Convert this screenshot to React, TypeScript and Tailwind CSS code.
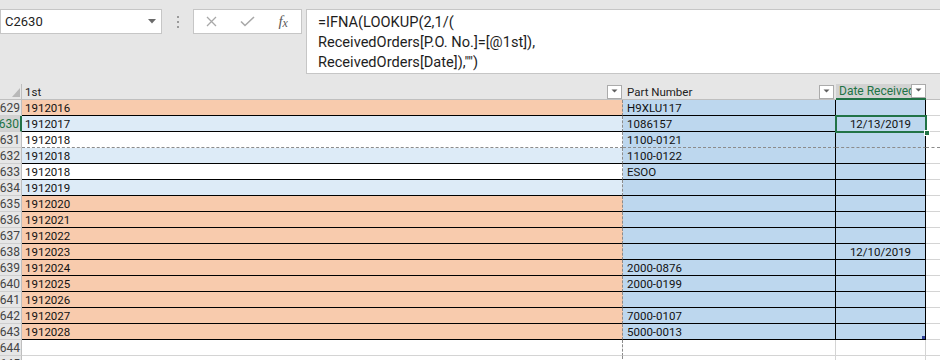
type Fill = 'o' | 'l' | 'w';

type Row = {
  n: number;
  a: string;
  b: string;
  c?: string;
  fill: Fill;
  sel?: boolean;
  dash?: boolean;
};

const rows: Row[] = [
  { n: 2629, a: '1912016', b: 'H9XLU117', fill: 'o' },
  { n: 2630, a: '1912017', b: '1086157', c: '12/13/2019', fill: 'l', sel: true },
  { n: 2631, a: '1912018', b: '1100-0121', fill: 'w', dash: true },
  { n: 2632, a: '1912018', b: '1100-0122', fill: 'l' },
  { n: 2633, a: '1912018', b: 'ESOO', fill: 'w' },
  { n: 2634, a: '1912019', b: '', fill: 'l' },
  { n: 2635, a: '1912020', b: '', fill: 'o' },
  { n: 2636, a: '1912021', b: '', fill: 'o' },
  { n: 2637, a: '1912022', b: '', fill: 'o' },
  { n: 2638, a: '1912023', b: '', c: '12/10/2019', fill: 'o' },
  { n: 2639, a: '1912024', b: '2000-0876', fill: 'o' },
  { n: 2640, a: '1912025', b: '2000-0199', fill: 'o' },
  { n: 2641, a: '1912026', b: '', fill: 'o' },
  { n: 2642, a: '1912027', b: '7000-0107', fill: 'o' },
  { n: 2643, a: '1912028', b: '5000-0013', fill: 'o' },
];

const fillClass: Record<Fill, string> = {
  o: 'bg-[#f8cbad]',
  l: 'bg-[#ddebf7]',
  w: 'bg-white',
};

// every sheet row is exactly 16px, cells must not grow it
const cols = 'grid grid-cols-[22px_601px_213px_90px_14px] grid-rows-[16px] h-[16px] leading-[14px]';

// page break lines are dashed, table borders solid; shorthand keeps the styles apart
const lineBlack = '[border-bottom:1px_solid_#000]';
const lineDash = '[border-bottom:1px_dashed_#8c8c8c]';
const lineGrid = '[border-bottom:1px_solid_#d4d4d4]';
const pageBreak = '[border-right:1px_dashed_#8c8c8c]';

function FilterButton() {
  return (
    <div className="w-[15px] h-[14px] bg-white border border-[#ababab] flex items-start justify-center pt-[3px] shrink-0">
      <svg width="7" height="4" viewBox="0 0 7 4">
        <polygon points="0.5,0.5 6.5,0.5 3.5,3.5" fill="#5f5f5f" />
      </svg>
    </div>
  );
}

function FormulaBar() {
  return (
    <div className="h-[84px] bg-[#e6e6e6] flex items-start pt-[9px] font-['Roboto',sans-serif]">
      <div className="w-[162px] h-[25px] bg-white border border-[#c6c6c6] flex items-center justify-between pl-[4px] pr-[5px] text-[13px] text-[#222]">
        <span>C2630</span>
        <svg width="8" height="5" viewBox="0 0 8 5">
          <polygon points="0,0 8,0 4,4.5" fill="#6a6a6a" />
        </svg>
      </div>
      <div className="w-[31px] h-[25px] flex flex-col items-center justify-center gap-[3px]">
        <span className="w-[2px] h-[2px] bg-[#9a9a9a]" />
        <span className="w-[2px] h-[2px] bg-[#9a9a9a]" />
        <span className="w-[2px] h-[2px] bg-[#9a9a9a]" />
      </div>
      <div className="w-[109px] h-[25px] bg-white border border-[#c6c6c6] flex items-center">
        <div className="w-[36px] flex justify-center">
          <svg width="11" height="11" viewBox="0 0 11 11">
            <path d="M1 1 L10 10 M10 1 L1 10" stroke="#a8a8a8" strokeWidth="1.3" />
          </svg>
        </div>
        <div className="w-[36px] flex justify-center">
          <svg width="15" height="11" viewBox="0 0 15 11">
            <path d="M1 5.5 L5 9.5 L14 1" stroke="#a8a8a8" strokeWidth="1.6" fill="none" />
          </svg>
        </div>
        <div className="w-[36px] flex justify-center text-[#5a5a5a] font-['Liberation_Serif',serif] italic text-[15px] leading-none">
          f<span className="text-[12px] mt-[3px]">x</span>
        </div>
      </div>
      <div className="ml-[4px] flex-1 h-[65px] bg-white border border-r-0 border-[#c6c6c6] pl-[11px] pt-[2px] text-[14.6px] leading-[20px] text-[#1e1e1e]">
        <div>=IFNA(LOOKUP(2,1/(</div>
        <div>ReceivedOrders[P.O. No.]=[@1st]),</div>
        <div>ReceivedOrders[Date]),"")</div>
      </div>
    </div>
  );
}

function HeaderRow() {
  return (
    <div className={`${cols} bg-[#e6e6e6] text-[11.5px] font-['Roboto',sans-serif]`}>
      <div className="relative border-r border-b border-[#bfbfbf]">
        <svg className="absolute left-[12px] top-[4px]" width="8" height="9" viewBox="0 0 8 9">
          <polygon points="8,0 8,9 0,9" fill="#b8b8b8" />
        </svg>
      </div>
      <div className="flex items-center justify-between pl-[3px] pr-[1px] border-b border-[#bfbfbf] text-[#222]">
        <span>1st</span>
        <FilterButton />
      </div>
      <div className="flex items-center justify-between pl-[4px] pr-[2px] border-b border-[#bfbfbf] text-[#222]">
        <span>Part Number</span>
        <FilterButton />
      </div>
      <div className="flex items-center pl-[3px] bg-[#d2d2d2] border-b-2 border-[#217346] text-[#217346] text-[12px]">
        <span className="flex-1 min-w-0 overflow-hidden whitespace-nowrap">Date Received</span>
        <FilterButton />
      </div>
      <div className="border-b border-[#bfbfbf]" />
    </div>
  );
}

function RowHead({ n, sel }: { n: number; sel?: boolean }) {
  return (
    <div
      className={
        sel
          ? 'bg-[#d2d2d2] border-r-2 border-r-[#217346] border-b border-b-[#cfcfcf] text-[#217346] text-[12px] flex items-center justify-end overflow-hidden pr-[1px]'
          : 'bg-[#e6e6e6] border-r border-r-[#bfbfbf] border-b border-b-[#cfcfcf] text-[#444] text-[12px] flex items-center justify-end overflow-hidden pr-[1px]'
      }
    >
      <span className="whitespace-nowrap">{n}</span>
    </div>
  );
}

function DataRow({ r, last }: { r: Row; last: boolean }) {
  const bottom = r.dash ? lineDash : lineBlack;
  const extraBottom = r.dash ? lineDash : lineGrid;
  return (
    <div className={`${cols} text-[11.5px] font-['Roboto',sans-serif] text-[#111]`}>
      <RowHead n={r.n} sel={r.sel} />
      <div className={`${fillClass[r.fill]} ${bottom} ${pageBreak} flex items-center pl-[3px] pt-[1px]`}>
        {r.a}
      </div>
      <div className={`bg-[#bdd7ee] ${bottom} border-r border-r-black flex items-center pl-[4px] pt-[1px]`}>
        {r.b}
      </div>
      <div className={`relative bg-[#bdd7ee] ${bottom} border-r border-r-black flex items-center justify-center pt-[1px]`}>
        {r.c}
        {r.sel && (
          <>
            <div className="absolute -left-[1px] -top-[1px] w-[92px] h-[18px] border-2 border-[#217346] z-10" />
            <div className="absolute left-[88px] top-[14px] w-[6px] h-[6px] bg-[#217346] border border-white z-20" />
          </>
        )}
        {last && <div className="absolute right-0 bottom-0 w-[3px] h-[3px] bg-[#2f3f98]" />}
      </div>
      <div className={`bg-white ${extraBottom}`} />
    </div>
  );
}

function EmptyRow({ n }: { n: number }) {
  return (
    <div className={`${cols} text-[11.5px] font-['Roboto',sans-serif]`}>
      <RowHead n={n} />
      <div className={`bg-white ${lineGrid} ${pageBreak}`} />
      <div className={`bg-white ${lineGrid} border-r border-r-[#d4d4d4]`} />
      <div className={`bg-white ${lineGrid} border-r border-r-[#d4d4d4]`} />
      <div className={`bg-white ${lineGrid}`} />
    </div>
  );
}

export default function App() {
  return (
    <div className="w-[940px] h-[360px] overflow-hidden bg-white select-none">
      <FormulaBar />
      <HeaderRow />
      {rows.map((r, i) => (
        <DataRow key={r.n} r={r} last={i === rows.length - 1} />
      ))}
      <EmptyRow n={2644} />
      <EmptyRow n={2645} />
    </div>
  );
}
